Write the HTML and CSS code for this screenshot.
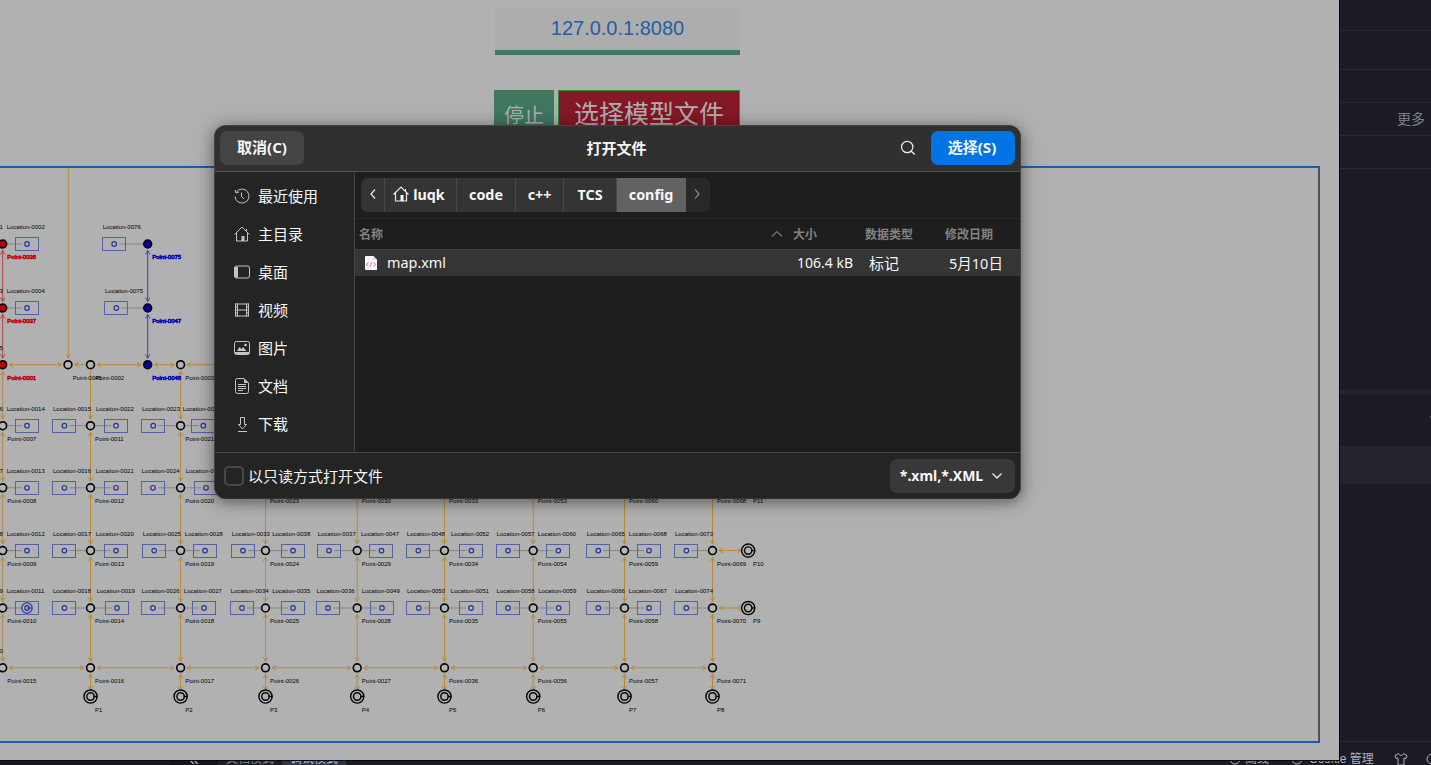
FILE: index.html
```html
<!DOCTYPE html>
<html lang="zh-CN">
<head>
<meta charset="utf-8">
<title>打开文件</title>
<link rel="stylesheet" href="styles.css">
</head>
<body>
<div class="desktop">
  <aside class="side">
    <div class="cell c1"></div>
    <div class="cell c2"></div>
    <div class="cell c3"></div>
    <div class="cell c3 more">更多</div>
    <div class="cell c3"></div>
    <div class="cell fill"></div>
    <div class="band"></div>
    <div class="gap"><i class="speck"></i></div>
    <div class="selected"></div>
  </aside>
  <footer class="status">
    <span class="collapse">«</span>
    <span class="mode">文档模式</span>
    <span class="mode active">调试模式</span>
    <span class="grow"></span>
    <svg class="ring" viewBox="0 0 12 12"><circle cx="6" cy="6" r="5"/><path d="M3 6l2 2 4-3"/></svg>
    <span class="offline">离线</span>
    <svg class="ring" viewBox="0 0 12 12"><circle cx="6" cy="6" r="5"/><path d="M4 7h1M7 8h1"/></svg>
    <span class="cookie">Cookie 管理</span>
    <svg class="shirt" viewBox="0 0 14 14"><path d="M4.500 1.500 1 3.500 2 6.500 4 6v7h6V6l2 .5 1-3-3.500-2C9 4 5 4 4.500 1.500z"/></svg>
    <svg class="ring last" viewBox="0 0 12 12"><circle cx="6" cy="6" r="5"/></svg>
  </footer>

  <main class="app">
    <div class="controls">
      <div class="address">127.0.0.1:8080</div>
      <div class="actions">
        <button class="stop">停止</button>
        <button class="choose">选择模型文件</button>
      </div>
    </div>
    <div class="plant"><svg id="map" class="map" viewBox="0 168 1318 573"></svg></div>
  </main>

  <section class="dialog">
    <header class="head">
      <button class="btn">取消(C)</button>
      <h1 class="title">打开文件</h1>
      <div class="head-right">
        <svg class="search" viewBox="0 0 16 16"><circle cx="7.200" cy="7" r="5.700"/><path d="M11.300 11.200l3.500 3.300"/></svg>
        <button class="btn primary">选择(S)</button>
      </div>
    </header>
    <div class="body">
      <nav class="places">
        <div class="place"><svg viewBox="0 0 16 16"><path d="M2.300 4A7 7 0 1 1 1 8.500M1 2l1 3 3-1M7.500 4.500V8.500L10 11"/></svg>最近使用</div>
        <div class="place"><svg viewBox="0 0 16 16"><path d="M.5 8.500 8 1l7.500 7.500M2.500 7v8h11V7M12.500 3v2"/><path class="solid" d="M7.500 10h3v5h-3z"/></svg>主目录</div>
        <div class="place"><svg viewBox="0 0 16 16"><rect x=".5" y="2" width="15" height="12" rx="2"/><path class="solid" d="M1 3h3v10.500H1z"/></svg>桌面</div>
        <div class="place"><svg viewBox="0 0 16 16"><path d="M1.500 1.500v13M14.500 1.500v13M3.500 1.500v13M12.500 1.500v13M1 2h14M3.500 8h9M1 14h14M1 5h2M1 8h2M1 11h2M13 5h2M13 8h2M13 11h2"/></svg>视频</div>
        <div class="place"><svg viewBox="0 0 16 16"><rect x=".5" y="1.500" width="15" height="13" rx="2"/><path class="solid" d="M1 12h14v2H1zM3 11l2.500-4 2 2L9 7l3.500 4z"/><circle class="solid" cx="11.500" cy="5" r="1.300"/></svg>图片</div>
        <div class="place"><svg viewBox="0 0 16 16"><path d="M3.500.5H10l4.500 4.500v8.500a2 2 0 0 1-2 2h-9a2 2 0 0 1-2-2v-11a2 2 0 0 1 2-2zM4 6.500h8M4 8.500h8M4 10.500h8M4 12.500h5"/><path class="solid" d="M10 .5V5h4.500z"/></svg>文档</div>
        <div class="place"><svg viewBox="0 0 16 16"><path d="M6.500 1.500h4v7h2L8.500 13 4.500 8.500h2zM4 15.500h9"/></svg>下载</div>
      </nav>
      <div class="content">
        <div class="pathbar">
          <span class="crumb arrow"><svg viewBox="0 0 8 12"><path d="M6 1.500 2 6l4 4.500"/></svg></span>
          <span class="crumb home"><svg viewBox="0 0 16 16"><path d="M.5 8.500 8 1l7.500 7.500M2.500 7v8h11V7M12.500 3v2"/><path class="solid" d="M7.500 9h3v6h-3z"/></svg>luqk</span>
          <span class="crumb code">code</span>
          <span class="crumb cpp">c++</span>
          <span class="crumb tcs">TCS</span>
          <span class="crumb current">config</span>
          <span class="crumb next"><svg viewBox="0 0 8 12"><path d="M2 1.500 6 6l-4 4.500"/></svg></span>
        </div>
        <div class="row columns">
          <span>名称</span>
          <svg class="sort" viewBox="0 0 12 8"><path d="M1 6.500 6 1.500l5 5"/></svg>
          <span>大小</span><span>数据类型</span><span>修改日期</span>
        </div>
        <div class="row file">
          <svg class="xml" viewBox="0 0 14 16"><path class="sheet" d="M1.500 1h8L13 4.500V15H1.500A1 1 0 0 1 1 14V2z"/><path class="fold" d="M9.500 1v3.500H13z"/><path class="tag" d="M4.500 7.500 2.200 9.400l2.300 1.900M9.500 7.500l2.300 1.900-2.300 1.900M8 7l-2 5"/></svg>
          <span class="name">map.xml</span>
          <span class="size">106.4 kB</span><span class="kind">标记</span><span class="date">5月10日</span>
        </div>
      </div>
    </div>
    <div class="foot">
      <label class="readonly"><i class="check"></i>以只读方式打开文件</label>
      <button class="filter">*.xml,*.XML<svg viewBox="0 0 12 8"><path d="M1.500 1.500 6 6l4.500-4.500"/></svg></button>
    </div>
  </section>
</div>
<script src="map.js"></script>
</body>
</html>
```
FILE: styles.css
```css
* { box-sizing: border-box; }
body { margin: 0; width: 1431px; height: 765px; overflow: hidden; font-family: "Noto Sans", "Noto Sans CJK SC", sans-serif; }
button { border: 0; margin: 0; padding: 0; font: inherit; color: inherit; }
svg { fill: none; flex: none; }

.desktop { position: relative; width: 1431px; height: 765px; overflow: hidden; background: #1b1b24; }
.side { margin-left: 1339px; height: 741px; display: flex; flex-direction: column; }
.cell { border-bottom: 1px solid #292932; flex: none; }
.c1 { height: 31px; }
.c2 { height: 39px; }
.c3 { height: 33px; }
.more { padding-right: 6px; text-align: right; font: 14px/31px "Noto Sans CJK SC", sans-serif; color: #7d818c; }
.fill { height: 221px; border: 0; }
.band { height: 4px; background: #252530; }
.gap { height: 52px; padding-top: 22px; display: flex; justify-content: flex-end; }
.speck { width: 1px; height: 2px; background: #50535e; }
.selected { height: 38px; background: #24242f; }

.status { height: 35px; border-top: 1px solid #292932; display: flex; align-items: center; font: 12px/34px "Liberation Sans", "Noto Sans CJK SC", sans-serif; color: #aeb3bf; background: linear-gradient(90deg, #1b1724 170px, #14131b 170px 218px, #1e1e28 218px 346px, #1b1b24 346px); }
.status svg { stroke: #aeb3bf; stroke-width: 1; }
.collapse { width: 56px; padding-left: 19px; margin-left: 170px; font-size: 18px; }
.mode { width: 56px; color: #858b98; }
.mode.active { width: 64px; padding-left: 8px; background: #303344; color: #b6bccb; }
.grow { flex: 1; }
.ring { width: 12px; height: 12px; }
.offline { margin: 0 22px 0 4px; }
.cookie { margin: 0 20px 0 6px; width: 65px; white-space: nowrap; }
.shirt { width: 14px; height: 14px; margin-right: 18px; }
.last { margin-right: -7px; }

.app { position: absolute; left: 0; top: 0; width: 1340px; height: 761px; background: #b1b1b1; border: solid #08080c; border-width: 0 1px 1px 0; overflow: hidden; }
.controls { height: 166px; padding: 7px 0 0 494px; }
.address { width: 245px; height: 48px; margin-left: 1px; background: #adadad; border-bottom: 5px solid #407860; text-align: center; font: 20px/42px "Liberation Sans", sans-serif; color: #245fa5; }
.actions { display: flex; gap: 4px; margin-top: 35px; font-family: "Noto Sans CJK SC", sans-serif; color: #b1b1b1; }
.stop { width: 60px; height: 50px; background: #407860; font-size: 20px; line-height: 48px; padding-bottom: 1px; }
.choose { width: 182px; height: 50px; background: #861827; border: 1px solid #1b9436; font-size: 25px; line-height: 42px; padding-bottom: 6px; }
.plant { width: 1320px; height: 577px; border: solid #1858a0; border-width: 1px 1px 1px 0; }
.map { display: block; width: 1319px; height: 575px; border: solid #50565b; border-width: 1px 1px 1px 0; }
.map text { font: 6px "Liberation Sans", sans-serif; fill: #000; }
.map .red { fill: #c00008; stroke: #c00008; stroke-width: .6; }
.map .blue { fill: #0000b8; stroke: #0000b8; stroke-width: .6; }
.edge { stroke: #b98a36; stroke-width: 1; }
.edge.r { stroke: #b84040; }
.edge.b { stroke: #4540ad; }
.link { stroke: #858585; stroke-width: 1; }
.node { stroke: #080808; stroke-width: 1.650; fill: #b5b5b5; }
.node.r { fill: #bc0008; }
.node.b { fill: #0000b5; }
.station { stroke: #080808; stroke-width: 1.450; }
.loc { stroke: #5462a0; stroke-width: 1; }
.dot { stroke: #2536a0; stroke-width: 1.200; }

.dialog { position: absolute; left: 214px; top: 125px; width: 807px; height: 374px; border-radius: 12px; overflow: hidden; display: flex; flex-direction: column; background: #242424; border: 1px solid #444; border-bottom-color: #343434; color: #f7f7f7; font-size: 15px; box-shadow: 0 3px 14px rgba(0,0,0,.42), 0 1px 30px rgba(0,0,0,.14); }
.head { height: 46px; flex: none; background: #303030; border-bottom: 1px solid #505050; display: grid; grid-template-columns: 1fr auto 1fr; align-items: center; padding: 0 5px 1px; }
.btn { width: 84px; height: 34px; border-radius: 7px; background: #444; font-size: 15px; font-weight: 700; line-height: 33px; padding-bottom: 1px; }
.primary { background: #0073e5; padding-right: 2px; }
.title { margin: 0; font-size: 15px; line-height: 22px; padding: 0 2px 1px 0; font-weight: 700; }
.head-right { display: flex; justify-content: flex-end; align-items: center; gap: 15px; }
.search { width: 16px; height: 16px; stroke: #eee; stroke-width: 1.200; }
.body { flex: 1; min-height: 0; display: flex; }
.places { width: 140px; border-right: 1px solid #464646; padding-top: 5px; }
.place { height: 38px; padding-left: 19px; display: flex; align-items: center; gap: 8px; line-height: 38px; }
.place svg { width: 16px; height: 16px; stroke: #c4c4c4; stroke-width: 1; }
.place .solid { fill: #c4c4c4; stroke: none; }
.content { flex: 1; background: #1e1e1e; }
.pathbar { display: flex; height: 46px; padding: 6px; }
.crumb { height: 34px; padding-bottom: 2px; background: #343434; border-right: 1px solid #484848; display: flex; align-items: center; justify-content: center; font-weight: 700; font-size: 14.300px; }
.crumb svg { stroke: #e8e8e8; stroke-width: 1.200; }
.arrow { width: 24px; border-radius: 7px 0 0 7px; }
.arrow svg, .next svg { width: 8px; height: 12px; }
.home { width: 72px; gap: 4px; padding-right: 3px; }
.home svg { width: 16px; height: 16px; }
.home .solid { fill: #fff; stroke: none; }
.code { width: 59px; }
.cpp { width: 48px; }
.tcs { width: 53px; }
.current { width: 69px; background: #626262; border-color: #626262; }
.next { width: 24px; padding-right: 2px; background: #282828; border: 0; border-radius: 0 7px 7px 0; }
.next svg { stroke: #858585; }
.row { display: grid; align-items: center; }
.columns { height: 32px; grid-template-columns: 412px 22px 72px 80px 1fr; padding-left: 4px; border-top: 1px solid #272727; border-bottom: 1px solid #404040; color: #828282; font-size: 12px; font-weight: 700; }
.sort { width: 12px; height: 8px; stroke: #777; stroke-width: 1.100; }
.file { height: 26px; grid-template-columns: 23px 1fr 57px 80px 86px; padding-left: 9px; background: #353535; }
.xml { width: 14px; height: 16px; }
.sheet { fill: #faf7fa; }
.fold { fill: #c6c4c7; }
.tag { stroke: #df5fd4; stroke-width: .9; }
.name { font-size: 14.400px; padding-bottom: 2px; }
.size { font-size: 14px; white-space: nowrap; padding-bottom: 2px; }
.kind { padding: 0 0 2px 15px; }
.date { padding: 0 0 2px 15px; white-space: nowrap; font-size: 14.500px; }
.foot { height: 46px; flex: none; border-top: 1px solid #464646; display: flex; justify-content: space-between; align-items: center; padding: 0 5px 0 9px; }
.readonly { display: flex; align-items: center; gap: 4px; }
.check { width: 20px; height: 20px; border: 2px solid #484848; border-radius: 5px; }
.filter { width: 125px; height: 34px; border-radius: 7px; background: #383838; font-weight: 700; font-size: 14px; display: flex; justify-content: center; align-items: center; gap: 8px; padding: 0 2px 1px 0; }
.filter svg { width: 12px; height: 8px; margin-top: 2px; stroke: #eee; stroke-width: 1.300; }
```
FILE: map.js
```javascript
const svg = document.getElementById('map');
const NS = 'http://www.w3.org/2000/svg';

function add(tag, attrs, text) {
  const el = document.createElementNS(NS, tag);
  for (const key in attrs) el.setAttribute(key, attrs[key]);
  if (text !== undefined) el.textContent = text;
  svg.appendChild(el);
}
function label(x, y, text, cls) {
  add('text', { x, y: y + 2.2, class: cls || '' }, text);
}
// Arrowhead with its tip at (x, y), pointing along (dx, dy).
function head(x, y, dx, dy) {
  const ax = x - dx * 4, ay = y - dy * 4;
  return `M${ax + dy * 2.2} ${ay + dx * 2.2}L${x} ${y}L${ax - dy * 2.2} ${ay - dx * 2.2}`;
}
function edge(x1, y1, x2, y2, cls, start = true, end = true) {
  const len = Math.hypot(x2 - x1, y2 - y1);
  const dx = (x2 - x1) / len, dy = (y2 - y1) / len, g = 6.5;
  const a = [x1 + dx * g, y1 + dy * g], b = [x2 - dx * g, y2 - dy * g];
  let d = `M${a}L${b}`;
  if (start) d += head(a[0], a[1], -dx, -dy);
  if (end) d += head(b[0], b[1], dx, dy);
  add('path', { d, class: 'edge ' + (cls || '') });
}
function node(x, y, cls) {
  add('circle', { cx: x, cy: y, r: 3.9, class: 'node ' + (cls || '') });
}
function station(x, y) {
  add('circle', { cx: x, cy: y, r: 6.6, class: 'station' });
  add('circle', { cx: x, cy: y, r: 3.7, class: 'station' });
  add('path', { d: `M${x + 3} ${y}h4`, class: 'station' });
}
function location_(cx, cy, px) {
  const dir = Math.sign(px - cx);
  add('path', { d: `M${cx + dir * 5} ${cy}L${px - dir * 4.5} ${cy}`, class: 'link' });
  add('rect', { x: Math.round(cx - 11.5) - 0.5, y: Math.round(cy - 7) + 0.5, width: 23, height: 13, class: 'loc' });
  add('circle', { cx, cy, r: 2.3, class: 'dot' });
}

const cols = [2.7, 90.5, 180.6, 265.5, 357.2, 444.5, 533.2, 624.5, 712.5];
const rows = [
  { y: 425.7, ly: 409, py: 439, cut: '6', points: ['0007', '0011', '0021'],
    locs: [['0014', 6.7, 27, 0], ['0015', 53, 64.4, 1], ['0022', 95.7, 116, 1], ['0023', 142, 153.2, 2], ['0029', 182.7, 203.3, 2]] },
  { y: 487.8, ly: 471, py: 501, cut: '7', points: ['0008', '0012', '0020', '0023', '0030', '0033', '0053', '0060', '0068'],
    locs: [['0013', 6.7, 27, 0], ['0016', 53, 64.4, 1], ['0021', 95.7, 116, 1], ['0024', 141.6, 153, 2], ['0030', 185.7, 206, 2]] },
  { y: 550.6, ly: 534, py: 564, cut: '8', points: ['0009', '0013', '0019', '0024', '0029', '0034', '0054', '0059', '0069'],
    locs: [['0012', 6.7, 27, 0], ['0017', 53, 64.4, 1], ['0020', 95.7, 116, 1], ['0025', 142.8, 154.2, 2], ['0028', 184.8, 205, 2],
      ['0033', 231.8, 243, 3], ['0038', 272.2, 293, 3], ['0037', 317.7, 329, 4], ['0047', 361, 381.5, 4], ['0048', 406.8, 418.3, 5],
      ['0052', 451, 471.4, 5], ['0057', 496.6, 508, 6], ['0060', 537.8, 558.3, 6], ['0065', 586.8, 598.3, 7], ['0068', 628.8, 649, 7], ['0073', 675, 686.4, 8]] },
  { y: 608, ly: 591, py: 621, cut: '9', points: ['0010', '0014', '0018', '0025', '0028', '0035', '0055', '0058', '0070'],
    locs: [['0011', 6.7, 27, 0], ['0018', 53, 64.4, 1], ['0019', 96.7, 117, 1], ['0026', 141.6, 153, 2], ['0027', 183.8, 204, 2],
      ['0034', 230.6, 242, 3], ['0035', 272.2, 293, 3], ['0036', 316.6, 328, 4], ['0049', 361.7, 382, 4], ['0050', 407, 418.7, 5],
      ['0051', 450.8, 471, 5], ['0058', 496.6, 508, 6], ['0059', 538.2, 558.7, 6], ['0066', 586.8, 598.3, 7], ['0067', 628.8, 649, 7], ['0074', 675, 686.4, 8]] },
  { y: 667.8, ly: 651, py: 681, cut: '0', points: ['0015', '0016', '0017', '0026', '0027', '0036', '0056', '0057', '0071'], locs: [] }
];
const topY = 364.7;

cols.forEach((x, c) => {
  let above = topY;
  rows.forEach((row, r) => {
    edge(x, above, x, row.y, '', !(c === 1 && r === 0));
    above = row.y;
  });
  if (c) {
    edge(x, 667.8, x, 696.5);
    edge(cols[c - 1], 667.8, x, 667.8);
  }
});
rows.forEach(row => {
  label(-0.4, row.ly, row.cut);
  row.locs.forEach(([id, lx, cx, col]) => {
    location_(cx, row.y, cols[col]);
    label(lx, row.ly, 'Location-' + id);
  });
  row.points.forEach((id, c) => label(cols[c] + 4.6, row.py, 'Point-' + id));
  cols.forEach(x => node(x, row.y));
});
add('circle', { cx: 27, cy: 608, r: 5.2, class: 'dot' });
add('path', { d: 'M27 608h5', class: 'dot' });
cols.slice(1).forEach((x, i) => {
  station(x, 696.5);
  label(x + 4.6, 710, 'P' + (i + 1));
});
[[550.6, 564, 'P10'], [608, 621, 'P9']].forEach(([y, ly, name]) => {
  edge(712.5, y, 748.2, y);
  station(748.2, y);
  label(753, ly, name);
});
label(753, 501, 'P11');

// Upper branch of the network.
add('path', { d: 'M68.300 168V358' + head(68.3, 358, 0, 1), class: 'edge' });
edge(2.7, topY, 68, topY);
edge(68, topY, 90.5, topY, '', true, false);
edge(90.5, topY, 147.7, topY);
edge(147.7, topY, 180.6, topY);
edge(180.6, topY, 265.5, topY);
[[2.7, 'r'], [147.7, 'b']].forEach(([x, cls]) => {
  edge(x, 244, x, 308, cls);
  edge(x, 308, x, topY, cls);
});
location_(27, 244, 2.7);
location_(27, 308, 2.7);
location_(114.2, 244, 147.7);
location_(116.3, 308, 147.7);
[244, 308, topY].forEach(y => {
  node(2.7, y, 'r');
  node(147.7, y, 'b');
});
[68, 90.5, 180.6].forEach(x => node(x, topY));
label(-0.4, 227, '1');
label(-0.4, 291, '3');
label(-0.4, 348, '5');
label(6.7, 227, 'Location-0002');
label(6.7, 291, 'Location-0004');
label(102.7, 227, 'Location-0076');
label(105, 291, 'Location-0075');
[['0036', 257], ['0037', 321], ['0001', 378]].forEach(([id, y]) => label(7.2, y, 'Point-' + id, 'red'));
[['0075', 257], ['0047', 321], ['0046', 378]].forEach(([id, y]) => label(152.2, y, 'Point-' + id, 'blue'));
label(72.7, 378, 'Point-0045');
label(95.2, 378, 'Point-0002');
label(185.2, 378, 'Point-0003');
```
